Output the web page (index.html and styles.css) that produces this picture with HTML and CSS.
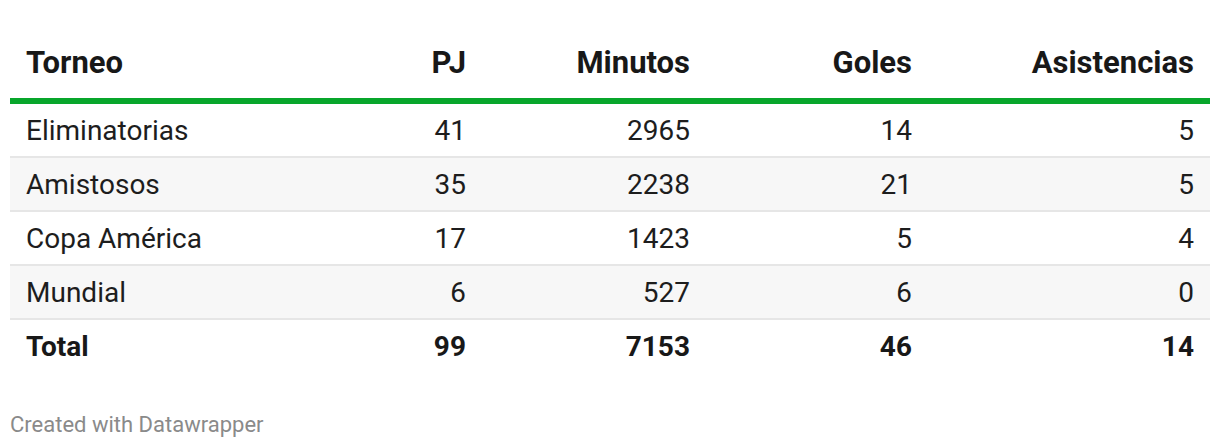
FILE: index.html
```html
<!DOCTYPE html>
<html lang="es">
<head>
<meta charset="utf-8">
<link rel="stylesheet" href="styles.css">
</head>
<body>
<div class="table">
  <div class="row head">
    <div class="cell">Torneo</div>
    <div class="cell num">PJ</div>
    <div class="cell num">Minutos</div>
    <div class="cell num">Goles</div>
    <div class="cell num">Asistencias</div>
  </div>
  <div class="row body">
    <div class="cell">Eliminatorias</div>
    <div class="cell num">41</div>
    <div class="cell num">2965</div>
    <div class="cell num">14</div>
    <div class="cell num">5</div>
  </div>
  <div class="row body alt">
    <div class="cell">Amistosos</div>
    <div class="cell num">35</div>
    <div class="cell num">2238</div>
    <div class="cell num">21</div>
    <div class="cell num">5</div>
  </div>
  <div class="row body">
    <div class="cell">Copa América</div>
    <div class="cell num">17</div>
    <div class="cell num">1423</div>
    <div class="cell num">5</div>
    <div class="cell num">4</div>
  </div>
  <div class="row body alt">
    <div class="cell">Mundial</div>
    <div class="cell num">6</div>
    <div class="cell num">527</div>
    <div class="cell num">6</div>
    <div class="cell num">0</div>
  </div>
  <div class="row body total">
    <div class="cell">Total</div>
    <div class="cell num">99</div>
    <div class="cell num">7153</div>
    <div class="cell num">46</div>
    <div class="cell num">14</div>
  </div>
</div>
<div class="footer">Created with Datawrapper</div>
</body>
</html>
```
FILE: styles.css
```css
html, body {
  margin: 0;
  padding: 0;
  background: #ffffff;
}
body {
  font-family: Roboto, "Liberation Sans", sans-serif;
  color: #1d1d1d;
  width: 1220px;
  height: 448px;
  overflow: hidden;
}
.table {
  margin: 0 10px;
  width: 1200px;
}
.row {
  display: grid;
  grid-template-columns: 250px 222px 224px 222px 282px;
}
.cell {
  padding: 0 16px;
  font-size: 28px;
  line-height: 32px;
  white-space: nowrap;
}
.num {
  text-align: right;
  font-variant-numeric: tabular-nums;
}
.head {
  border-bottom: 6px solid #08a62b;
}
.head .cell {
  font-size: 31px;
  font-weight: 700;
  color: #181818;
  padding-top: 47px;
  padding-bottom: 19px;
}
.body {
  height: 50px;
  padding-top: 2px;
  align-items: center;
  border-bottom: 2px solid #e6e6e6;
}
.alt {
  background: #f7f7f7;
}
.total {
  border-bottom: none;
}
.total .cell {
  font-weight: 700;
  color: #181818;
}
.footer {
  margin: 40px 10px 0;
  font-size: 22px;
  line-height: 26px;
  color: #8a8a8a;
}
```
